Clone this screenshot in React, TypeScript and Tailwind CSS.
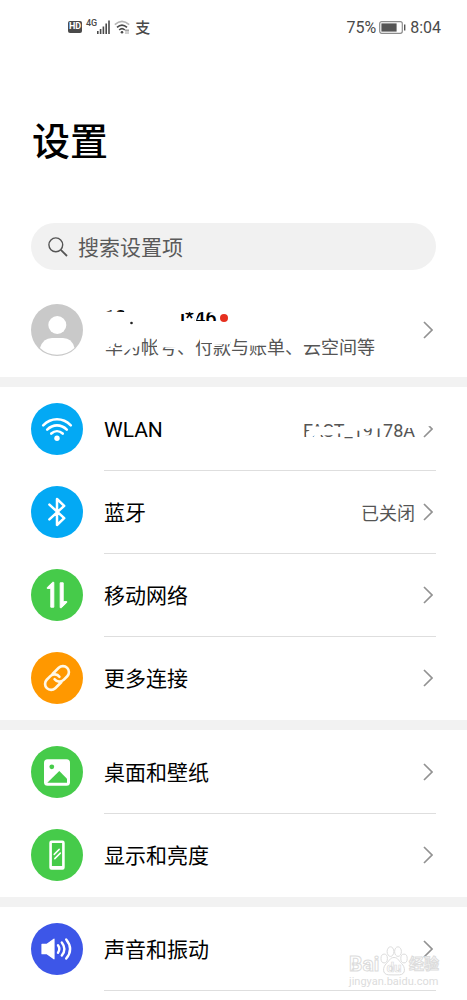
import type { ReactNode } from "react";

const WifiIcon = () => (
  <svg viewBox="0 0 52 52" className="h-full w-full" fill="none" stroke="white" strokeWidth="2.6" strokeLinecap="round">
    <path d="M12.2 22.3C20.2 14.3 31.8 14.3 39.8 22.3" />
    <path d="M16.2 26.6C22 20.9 30 20.9 35.8 26.6" />
    <path d="M20.3 30.5C23.7 27.4 28.3 27.4 31.7 30.5" />
    <circle cx="26" cy="35.2" r="2.7" fill="white" stroke="none" />
  </svg>
);

const BluetoothIcon = () => (
  <svg
    viewBox="0 0 52 52"
    className="h-full w-full"
    fill="none"
    stroke="white"
    strokeWidth="2.5"
    strokeLinecap="round"
    strokeLinejoin="round"
  >
    <path d="M18.4 18.6L33.2 32.2L26 39V13L33.2 19.8L18.4 33.4" />
  </svg>
);

const MobileDataIcon = () => (
  <svg viewBox="0 0 52 52" className="h-full w-full" fill="white" stroke="white" strokeWidth="1" strokeLinejoin="round">
    <path d="M22.8 13.3V38.2H19.8V19.4H16.2V18.6L21.6 13.3Z" />
    <path d="M29.2 13.8H32.2V32.6H35.8V33.4L30.4 38.7H29.2Z" />
  </svg>
);

const LinkIcon = () => (
  <svg viewBox="0 0 52 52" className="h-full w-full" fill="none" stroke="#fff8e6" strokeWidth="2.2" strokeLinecap="round">
    <g transform="translate(11.6 11.6) scale(1.2)">
      <path d="M10 13a5 5 0 0 0 7.54.54l3-3a5 5 0 0 0-7.07-7.07l-5 5" />
      <path d="M14 11a5 5 0 0 0-7.54-.54l-3 3a5 5 0 0 0 7.07 7.07l5-5" />
    </g>
  </svg>
);

const PictureIcon = () => (
  <svg viewBox="0 0 52 52" className="h-full w-full">
    <rect x="13" y="13.2" width="26" height="26.6" rx="3.5" fill="white" />
    <circle cx="20.8" cy="20.8" r="2.4" fill="#46cb4a" />
    <path d="M16.3 36.8L28.3 25L36 32.7V36.8Z" fill="#46cb4a" />
  </svg>
);

const DisplayIcon = () => (
  <svg viewBox="0 0 52 52" className="h-full w-full" fill="none" stroke="white">
    <path d="M20.5 11.5H31.5Q33.7 11.5 33.7 13.7V38.6Q33.7 40.8 31.5 40.8H20.5Q18.3 40.8 18.3 38.6V13.7Q18.3 11.5 20.5 11.5ZM20.9 14.1V37H31.1V14.1Z" fill="white" fillRule="evenodd" stroke="none" />
    <path d="M23.2 25.4L28.2 20.4M23.8 29.6L29.3 24.1" strokeWidth="1.5" strokeLinecap="round" />
  </svg>
);

const SoundIcon = () => (
  <svg viewBox="0 0 52 52" className="h-full w-full" fill="none" stroke="white" strokeWidth="2.4" strokeLinecap="round">
    <path d="M11 21.3H16L23 16.2V35.8L16 30.7H11Z" fill="white" strokeWidth="1.2" strokeLinejoin="round" />
    <path d="M27 22.3Q29.6 26 27 29.7" />
    <path d="M30.8 19.4Q36 26 30.8 32.6" />
    <path d="M35.2 16.4Q43 26 35.2 35.6" />
  </svg>
);

const Chevron = () => (
  <svg viewBox="0 0 10 18" className="h-[18px] w-[10px] shrink-0" fill="none" stroke="#929292" strokeWidth="1.7">
    <path d="M1 1L9 9L1 17" />
  </svg>
);

// White strokes that hide most of the network name and the top of the row arrow
const NetworkScribble = () => (
  <svg viewBox="0 0 134 28" className="absolute top-0 right-0 h-7 w-[134px]" fill="white">
    <path d="M4 18L12 11.5H21V20L13 20L8 24L5 24Z" />
    <path d="M20 12H34V20L20 20.5Z" />
    <path d="M33 12H43V18.5H33Z" />
    <path d="M50 5H59V16L50 15Z" />
    <path d="M59 5H73V14L66 13L59 15Z" />
    <path d="M60 20.5L72 20V25H60Z" />
    <path d="M72 5L81 5L80 13L72 14Z" />
    <path d="M101 5L116 4V13L103 13Z" />
    <path d="M118 2H129L128 11L118 14Z" />
    <path d="M128 2H134V11H128Z" />
  </svg>
);

// White strokes over the account name and the start of its description
const AccountScribble = () => (
  <svg viewBox="0 0 280 56" className="absolute top-0 left-0 h-14 w-[280px]" fill="white">
    <path d="M0 8L7 7.5L20 8L26 0H76V30H0Z" />
    <path d="M76 0H113V9L98 8L92 10L86 8L76 10Z" />
    <path d="M76 17H113V28H76Z" />
    <path d="M90 17L93 9L94 9L92 17Z" />
    <path d="M0 31H36V42L28 44L19 49L19 42L12 39L8 42L0 45Z" />
    <path d="M53 31H73V44L62 43L53 45Z" />
    <path d="M96 31L108 31V39L96 39Z" />
    <path d="M108 31H126V40L117 40L108 41Z" />
    <path d="M144 31H162V40L152 42L144 41Z" />
    <path d="M196 31H216V38H196Z" />
    <circle cx="27.5" cy="19" r="1.3" fill="#222" />
  </svg>
);

type Item = {
  label: string;
  color: string;
  icon: ReactNode;
  value?: string;
  hidden?: boolean;
};

const groups: Item[][] = [
  [
    { label: "WLAN", color: "bg-[#03a9f4]", icon: <WifiIcon />, value: "FAST_19178A", hidden: true },
    { label: "蓝牙", color: "bg-[#03a9f4]", icon: <BluetoothIcon />, value: "已关闭" },
    { label: "移动网络", color: "bg-[#46cb4a]", icon: <MobileDataIcon /> },
    { label: "更多连接", color: "bg-[#ff9800]", icon: <LinkIcon /> },
  ],
  [
    { label: "桌面和壁纸", color: "bg-[#46cb4a]", icon: <PictureIcon /> },
    { label: "显示和亮度", color: "bg-[#46cb4a]", icon: <DisplayIcon /> },
  ],
  [{ label: "声音和振动", color: "bg-[#3d56e8]", icon: <SoundIcon /> }],
];

const SettingsRow = ({ item, divider }: { item: Item; divider: boolean }) => (
  <li>
    <a href="#" className="flex h-[83px] items-center gap-[21px]">
      <span className={`mb-px h-[52px] w-[52px] shrink-0 rounded-full ${item.color}`}>{item.icon}</span>
      <span
        className={`flex h-full flex-1 items-center justify-between border-b ${
          divider ? "border-[#dedede]" : "border-transparent"
        }`}
      >
        <span className="pt-1 text-[21px] text-black">{item.label}</span>
        <span className="relative flex items-center gap-2 pr-[3px]">
          {item.value && <span className="pt-1 text-lg leading-6 text-[#555]">{item.value}</span>}
          <Chevron />
          {item.hidden && <NetworkScribble />}
        </span>
      </span>
    </a>
  </li>
);

const StatusBar = () => (
  <div className="flex h-[54px] items-center justify-between pr-[26px] pl-[68px] text-[#4a4a4a]">
    <div className="flex items-center">
      <span className="flex h-3 w-[14px] items-center justify-center rounded-xs bg-[#4a4a4a] text-[9px] font-bold text-white">
        HD
      </span>
      <span className="mb-2 ml-1 text-[9px] leading-2 font-medium">4G</span>
      <svg viewBox="0 0 13 14" className="h-[14px] w-[13px]" fill="#4a4a4a">
        <path d="M0 11H1.6V14H0ZM2.8 9H4.4V14H2.8ZM5.6 6.5H7.2V14H5.6ZM8.4 3.5H10V14H8.4ZM11.2 0.5H12.8V14H11.2Z" />
      </svg>
      <svg viewBox="0 0 16 14" className="ml-1 h-[14px] w-4" fill="none" stroke="#4a4a4a" strokeWidth="1.6">
        <path d="M0.8 4.6Q8 -2 15.2 4.6" stroke="#b5b5b5" />
        <path d="M3 7.4Q8 2.8 13 7.4" />
        <path d="M5.2 10Q8 7.4 10.8 10" />
        <circle cx="8" cy="12.3" r="1.3" fill="#4a4a4a" stroke="none" />
        <path d="M12 9.5V13.5M14 9.5V13.5" strokeWidth="1" strokeDasharray="2 1" />
      </svg>
      <span className="ml-[5px] pt-0.5 text-[15px] leading-4 font-medium">支</span>
    </div>
    <div className="flex items-center pt-px text-base">
      <span>75%</span>
      <svg viewBox="0 0 27 13" className="mr-1 ml-[3px] h-[13px] w-[27px]">
        <rect x="0.7" y="0.7" width="22.6" height="11.6" rx="2" fill="white" stroke="#8c8c8c" strokeWidth="1.2" />
        <rect x="2.4" y="2.4" width="15.2" height="8.2" fill="#555" />
        <path d="M25 3.5H26.4V9.5H25Z" fill="#555" />
      </svg>
      <span>8:04</span>
    </div>
  </div>
);

const Watermark = () => (
  <div className="pointer-events-none absolute right-[28px] bottom-3 flex w-[90px] flex-col text-transparent select-none">
    <div className="flex items-end justify-between">
      <span className="text-[21px] leading-6 font-bold [-webkit-text-stroke:1px_#dcdcdc]">Bai</span>
      <svg viewBox="0 0 28 30" className="h-[30px] w-[28px]" fill="white" stroke="#dcdcdc" strokeWidth="1">
        <ellipse cx="4.2" cy="12.5" rx="3.2" ry="4.4" />
        <ellipse cx="10.5" cy="5.6" rx="3.4" ry="4.8" />
        <ellipse cx="18" cy="5.6" rx="3.4" ry="4.8" />
        <ellipse cx="24" cy="12.5" rx="3.2" ry="4.4" />
        <path d="M14 11.5C18 11.5 18.8 15 21.5 17.5C25.5 21 26 28.5 19.5 28.8C16 29 12 29 8.5 28.8C2 28.5 2.5 21 6.5 17.5C9.2 15 10 11.5 14 11.5Z" />
        <text x="14" y="26" textAnchor="middle" fontSize="13" fontWeight="700" strokeWidth="0.7">
          du
        </text>
      </svg>
      <span className="text-[15px] leading-6 font-bold [-webkit-text-stroke:1px_#dcdcdc]">经验</span>
    </div>
    <span className="text-[11px] leading-3 whitespace-nowrap text-[#dcdcdc]">jingyan.baidu.com</span>
  </div>
);

const App = () => {
  return (
    <main className="relative min-h-screen overflow-x-hidden bg-white font-[Roboto,'Noto_Sans_CJK_SC',sans-serif]">
      <StatusBar />

      <header className="px-[31px]">
        <h1 className="mt-[63px] pl-px text-[38px] leading-[50px] font-medium text-black">设置</h1>
        <label className="mt-14 flex h-[47px] items-center gap-[10px] rounded-full bg-[#f1f1f1] pr-5 pl-[17px]">
          <svg viewBox="0 0 20 20" className="h-5 w-5 shrink-0" fill="none" stroke="#555" strokeWidth="1.4">
            <circle cx="7.8" cy="7.8" r="6.9" />
            <path d="M12.8 12.8L19 19" strokeWidth="1.8" />
          </svg>
          <input
            type="search"
            aria-label="搜索设置项"
            placeholder="搜索设置项"
            className="w-full min-w-0 bg-transparent pt-1 text-[21px] outline-none placeholder:text-[#5a5a5a]"
          />
        </label>
      </header>

      <a href="#" className="mt-[34px] mb-[21px] flex items-center gap-[21px] px-[31px]">
        <svg viewBox="0 0 52 52" className="h-[52px] w-[52px] shrink-0">
          <circle cx="26" cy="26" r="26" fill="#c9c9c9" />
          <circle cx="26.3" cy="21" r="9" fill="white" />
          <path d="M9 44Q12 34 21 34H32Q41 34 43.5 44Q36 50.8 26 50.8Q16 50.8 9 44Z" fill="white" />
        </svg>
        <span className="relative flex h-[52px] flex-1 flex-col gap-[6px]">
          <span className="flex items-center gap-[3px] text-xl leading-7 font-medium text-black">
            13******i*46
            <span className="h-2 w-2 rounded-full bg-[#e6301f]" />
          </span>
          <span className="pl-px text-lg leading-5 whitespace-nowrap text-[#555]">华为帐号、付款与账单、云空间等</span>
          <AccountScribble />
        </span>
        <span className="pr-[3px]">
          <Chevron />
        </span>
      </a>

      {groups.map((group) => (
        <section key={group[0].label} className="border-t-10 border-[#f2f2f2] px-[31px] pt-px">
          <ul>
            {group.map((item, i) => (
              <SettingsRow key={item.label} item={item} divider={i < group.length - 1 || group.length === 1} />
            ))}
          </ul>
        </section>
      ))}

      <Watermark />
    </main>
  );
};

export default App;
